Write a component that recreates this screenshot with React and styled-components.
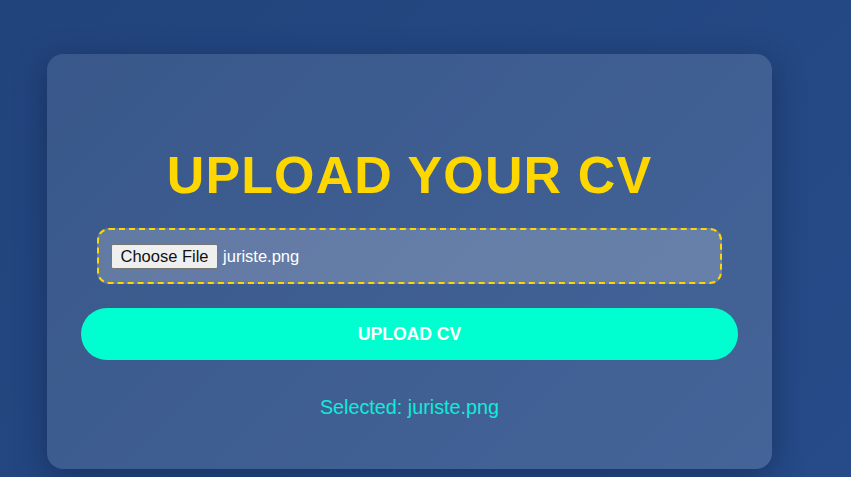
import React from 'react'
import styled, { createGlobalStyle } from 'styled-components'

const Global = createGlobalStyle`
  html, body {
    margin: 0;
    padding: 0;
  }
  body {
    min-height: 477px;
    background: linear-gradient(135deg, #22447c 0%, #244883 60%, #264b88 100%);
    font-family: "Liberation Sans", Arial, sans-serif;
  }
`

const Page = styled.div`
  padding: 54px 0 8px 47px;
`

const Card = styled.div`
  width: 725px;
  height: 415px;
  box-sizing: border-box;
  padding: 92px 34px 0;
  border-radius: 16px;
  background: linear-gradient(135deg, rgba(255,255,255,0.1), rgba(255,255,255,0.14));
  box-shadow: 0 8px 32px rgba(10, 25, 60, 0.45);
  display: flex;
  flex-direction: column;
  align-items: center;
`

const Title = styled.h1`
  margin: 0;
  font-size: 52px;
  line-height: 58px;
  font-weight: 700;
  letter-spacing: 1.1px;
  color: #ffd700;
  text-transform: uppercase;
`

const Drop = styled.div`
  margin-top: 24px;
  width: 625px;
  height: 56px;
  box-sizing: border-box;
  border: 2px dashed #ffd700;
  border-radius: 12px;
  background: rgba(255,255,255,0.2);
  display: flex;
  align-items: center;
  padding: 0 12px;
  gap: 5px;
`

const ChooseBtn = styled.span`
  display: inline-flex;
  align-items: center;
  height: 25px;
  box-sizing: border-box;
  padding: 0 8.5px;
  font-size: 16.5px;
  color: #111;
  background: #efefef;
  border: 1px solid #767676;
  border-radius: 2px;
`

const FileName = styled.span`
  font-size: 16.5px;
  color: #ffffff;
`

const UploadBtn = styled.button`
  margin-top: 24px;
  width: 100%;
  height: 52px;
  border: none;
  border-radius: 26px;
  background: #00ffd0;
  color: #ffffff;
  font-family: "Liberation Sans", Arial, sans-serif;
  font-size: 17.6px;
  font-weight: 700;
  text-transform: uppercase;
  cursor: pointer;
`

const Selected = styled.p`
  margin: 36px 0 0;
  font-size: 19.8px;
  line-height: 23px;
  color: #10ecd8;
`

const App = () => {
  return (
    <Page>
      <Global />
      <Card>
        <Title>Upload your CV</Title>
        <Drop>
          <ChooseBtn>Choose File</ChooseBtn>
          <FileName>juriste.png</FileName>
        </Drop>
        <UploadBtn>Upload CV</UploadBtn>
        <Selected>Selected: juriste.png</Selected>
      </Card>
    </Page>
  )
}

export default App
